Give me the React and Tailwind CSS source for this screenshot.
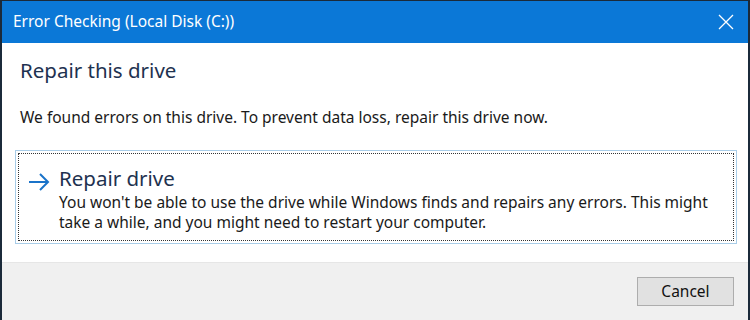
import React from "react";

const font = { fontFamily: '"Noto Sans", "Open Sans", sans-serif' };

const App = () => {
  return (
    <div
      className="w-[750px] h-[320px] flex flex-col bg-white border-x-2 border-t border-[#1b2a3a] overflow-hidden"
      style={font}
    >
      {/* title bar */}
      <div className="h-[42px] flex items-center justify-between bg-[#0b78d7] pl-[11px] pr-[14px] shrink-0">
        <span className="text-[15.5px] text-white leading-none">Error Checking (Local Disk (C:))</span>
        <svg width="16" height="16" viewBox="0 0 16 16" className="text-white">
          <path d="M1 1 L15 15 M15 1 L1 15" stroke="currentColor" strokeWidth="1.3" fill="none" />
        </svg>
      </div>

      {/* body */}
      <div className="flex-1 flex flex-col px-[13px]">
        <h1 className="mt-[14px] ml-[5px] text-[20.5px] text-[#1e3250] leading-[26px]">Repair this drive</h1>
        <p className="mt-[24px] ml-[5px] text-[15.5px] text-[#1a1a1a] leading-[20px]">
          We found errors on this drive. To prevent data loss, repair this drive now.
        </p>

        <button className="mt-[23px] w-[722px] h-[94px] shrink-0 border border-[#a9cde8] p-[2px] text-left">
          <div className="h-full border border-dotted border-[#333] flex pl-[8px] pt-[10px]">
            <svg width="24" height="20" viewBox="0 0 24 20" className="mt-[8px] shrink-0 text-[#1a73c9]">
              <path d="M2 10 H21 M13 2 L21 10 L13 18" stroke="currentColor" strokeWidth="2" fill="none" />
            </svg>
            <div className="ml-[8px] flex flex-col">
              <span className="text-[20.5px] text-[#1e3250] leading-[28px]">Repair drive</span>
              <span className="text-[15.5px] text-[#1a1a1a] leading-[20px]">
                You won't be able to use the drive while Windows finds and repairs any errors. This might
                <br />
                take a while, and you might need to restart your computer.
              </span>
            </div>
          </div>
        </button>
      </div>

      {/* footer */}
      <div className="h-[58px] bg-[#f0f0f0] border-t border-[#e6e6e6] flex items-center justify-end pr-[14px] shrink-0">
        <button className="w-[97px] h-[29px] bg-[#e1e1e1] border border-[#adadad] text-[15.5px] text-[#111] leading-none">
          Cancel
        </button>
      </div>
    </div>
  );
};

export default App;
